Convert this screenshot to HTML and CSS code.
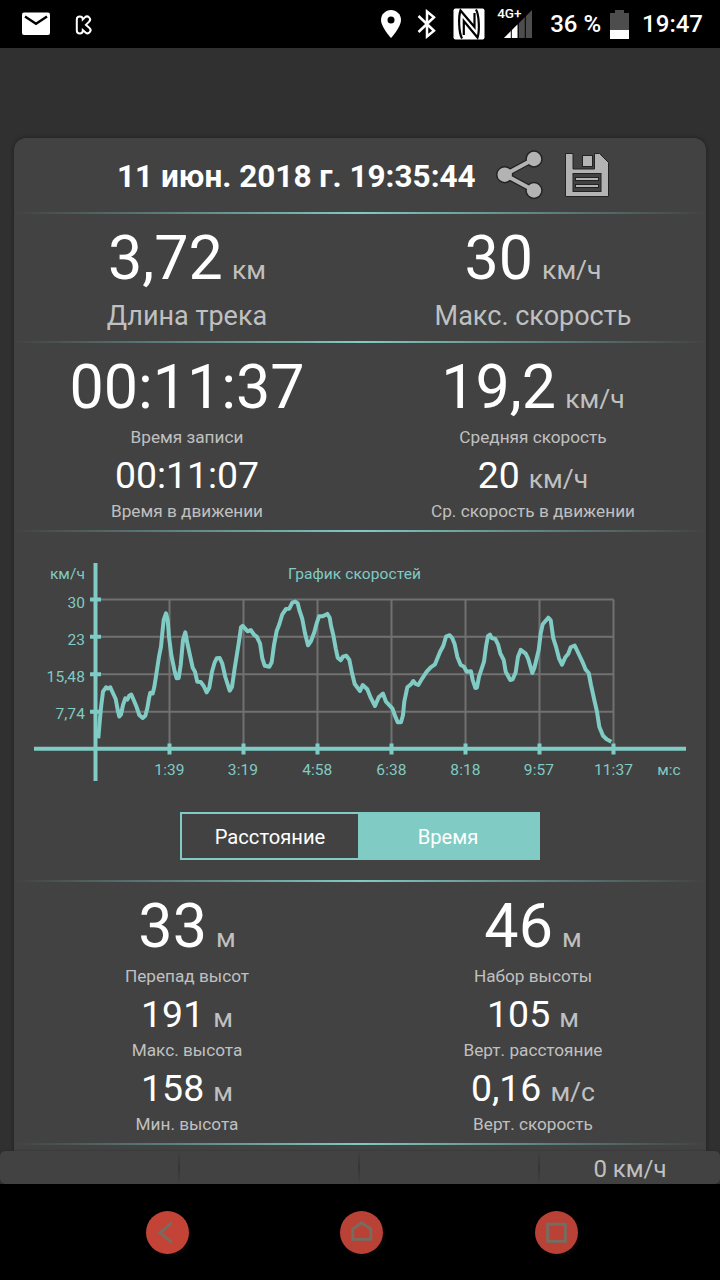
FILE: index.html
```html
<!DOCTYPE html>
<html lang="ru">
<head>
    <meta charset="UTF-8">
    <meta name="viewport" content="width=device-width, initial-scale=1.0">
    <title>Статистика трека</title>
    <link rel="stylesheet" href="styles.css">
</head>
<body>

    <div class="status-bar">
        <svg class="mail" width="28" height="24" viewBox="0 0 28 24">
            <rect x="0" y="0.5" width="28" height="22.5" rx="2" fill="#fff"/>
            <path d="M3 4.5 L14 11.8 L25 4.5" fill="none" stroke="#000" stroke-width="2.4"/>
        </svg>
        <svg class="app-icon" width="18" height="20" viewBox="0 0 18 20">
            <g fill="none" stroke-linecap="round" stroke-linejoin="round">
                <path d="M4.8 4.5 V15.5 M12 4.5 L6.5 10 L12.5 15.2" stroke="#fff" stroke-width="8"/>
                <path d="M4.8 4.5 V15.5 M12 4.5 L6.5 10 L12.5 15.2" stroke="#000" stroke-width="4"/>
            </g>
        </svg>
        <div class="status-right">
            <svg class="pin" width="20" height="28" viewBox="0 0 20 28">
                <path d="M10 0 C4.5 0 0 4.4 0 9.9 C0 17 10 28 10 28 C10 28 20 17 20 9.9 C20 4.4 15.5 0 10 0 Z" fill="#fff"/>
                <circle cx="10" cy="10" r="3.5" fill="#000"/>
            </svg>
            <svg class="bluetooth" width="20" height="30" viewBox="0 0 20 30">
                <path d="M1.5 7 L17 21.8 L10 27.5 L10 2.5 L17 8.2 L1.5 23" fill="none" stroke="#fff" stroke-width="2.5"/>
            </svg>
            <svg class="nfc" width="32" height="32" viewBox="0 0 32 32">
                <rect x="0.5" y="0.5" width="31" height="31" rx="2" fill="#fff"/>
                <path d="M9 30.5 C5.5 24 5.5 8 7.5 2.5 L21.5 19 V5 M23 1.5 C26.5 8 26.5 24 24.5 29.5 L10.8 13 V27" fill="none" stroke="#000" stroke-width="2.2"/>
            </svg>
            <div class="signal">
                <span class="network">4G+</span>
                <svg width="28" height="28" viewBox="0 0 28 28">
                    <path d="M0 28 L28 0 L28 28 Z" fill="#4d4d4d"/>
                    <path d="M0 28 L13.5 14.5 L13.5 28 Z" fill="#fff"/>
                    <path d="M7.3 12 V28 M14.3 8 V28 M21.3 2 V28" stroke="#000" stroke-width="1"/>
                </svg>
            </div>
            <span class="percent">36 %</span>
            <svg class="battery" width="19" height="29" viewBox="0 0 19 29">
                <path d="M5 0 H14 V3 H19 V29 H0 V3 H5 Z" fill="#4d4d4d"/>
                <rect x="0" y="20" width="19" height="9" fill="#fff"/>
            </svg>
            <span class="clock">19:47</span>
        </div>
    </div>

    <div class="screen">
        <div class="card">
            <div class="card-header">
                <h1>11 июн. 2018 г. 19:35:44</h1>
                <svg class="share" width="50" height="52" viewBox="0 0 50 52">
                    <g stroke="#222" fill="#222">
                        <path d="M39 10 L9.7 25.7 L39 41.5" fill="none" stroke-width="6.5"/>
                        <circle cx="39" cy="10" r="8.2"/>
                        <circle cx="9.7" cy="25.7" r="8.2"/>
                        <circle cx="39" cy="41.5" r="8.2"/>
                    </g>
                    <g fill="#b3b3b3">
                        <path d="M39 10 L9.7 25.7 L39 41.5" fill="none" stroke="#b3b3b3" stroke-width="4"/>
                        <circle cx="39" cy="10" r="7.2"/>
                        <circle cx="9.7" cy="25.7" r="7.2"/>
                        <circle cx="39" cy="41.5" r="7.2"/>
                    </g>
                </svg>
                <svg class="save" width="44" height="44" viewBox="0 0 44 44">
                    <g fill="#b3b3b3" stroke="#222" stroke-width="1">
                        <path d="M0.5 0.5 H8 V16 H29.5 V0.5 H34.5 L43.5 9.5 V43.5 H0.5 Z"/>
                        <rect x="17.5" y="2.5" width="10" height="11"/>
                        <rect x="8" y="20.5" width="28" height="18" fill="#424242"/>
                        <rect x="10.5" y="24.5" width="23" height="3"/>
                        <rect x="10.5" y="31.5" width="23" height="3"/>
                    </g>
                </svg>
            </div>

            <div class="divider"></div>

            <div class="stats summary">
                <div class="stat">
                    <div class="value big">3,72<span class="unit">км</span></div>
                    <div class="label large">Длина трека</div>
                </div>
                <div class="stat">
                    <div class="value big">30<span class="unit">км/ч</span></div>
                    <div class="label large">Макс. скорость</div>
                </div>
            </div>

            <div class="divider"></div>

            <div class="stats times">
                <div class="stat">
                    <div class="value big">00:11:37</div>
                    <div class="label">Время записи</div>
                    <div class="value">00:11:07</div>
                    <div class="label">Время в движении</div>
                </div>
                <div class="stat">
                    <div class="value big">19,2<span class="unit">км/ч</span></div>
                    <div class="label">Средняя скорость</div>
                    <div class="value">20<span class="unit">км/ч</span></div>
                    <div class="label">Ср. скорость в движении</div>
                </div>
            </div>

            <div class="divider"></div>

            <svg class="chart" width="692" height="280" viewBox="14 532 692 280">
                <path class="grid" d="M96 599.5 H613.5 M96 636.8 H613.5 M96 674.3 H613.5 M96 711.7 H613.5
                    M169.5 599.5 V748 M243.5 599.5 V748 M317.5 599.5 V748 M391.5 599.5 V748 M465.5 599.5 V748 M539.5 599.5 V748 M613.5 599.5 V748"/>
                <path class="axis" d="M95.5 563 V781 M34 748.8 H686
                    M90 599.5 H101 M90 636.8 H101 M90 674.3 H101 M90 711.7 H101
                    M169.5 743.5 V754.5 M243.5 743.5 V754.5 M317.5 743.5 V754.5 M391.5 743.5 V754.5 M465.5 743.5 V754.5 M539.5 743.5 V754.5 M613.5 743.5 V754.5"/>
                <polyline class="speed" points="98.3,738.3 100,718.3 101.3,705 103,691.7 106,687.3 108,688.5 110.3,687.3 113,693.3 115.7,699 117.7,710 119.3,716.5 121,714.5 123,705 125.3,698.3 127.3,699.7 129.3,695.7 131.3,694.5 133.7,700 136.7,707.3 139.3,715 142.7,718 145.3,715.7 147.3,708.3 149,698.3 150.3,692.7 152.7,693.5 154.3,687 156.7,671.7 159,656.7 161,646.7 162.3,633.3 163.7,620 166,613.3 167.7,620 169,636.7 171.3,655 174.7,671.7 176.7,678.3 178.7,678 180.7,665 183,640 185.3,632.3 187.7,645 192.7,667.7 195,671.7 197.3,681.7 200.7,682 203.7,686 206.7,692.3 209.3,687.7 212,671.7 214.7,662.3 216.7,658.3 219.7,658 222.3,663.7 225.3,677 229.7,690.7 232,687 234.7,668.3 238.7,643.3 241,627.3 242.7,625.9 247.7,631.3 250.7,630 254.3,635 256.7,636.7 260,643.3 262.3,658.3 264.7,665.7 269.3,666.7 271.7,662.3 274,645 276.7,631 279.3,624.3 282.3,614.3 286,609 289.3,608.7 292.3,602.7 295.3,601.5 297.7,603.3 299.3,610 302.3,619 305,633.3 308,645.3 311,641 314.3,632.3 316.7,623.3 319,616.3 322.7,616.3 327.3,613.9 329.7,617.7 331,625.7 333.3,635 335.7,648.3 337.7,657.7 340.7,660.3 343,656.7 346.3,655.7 349.3,659.7 351.7,671.7 354.7,684 360,691 362.7,685 367.3,689.3 370.7,697.7 375,706 378.7,697.3 383,693.6 386,701.7 392.3,708.3 395,715.7 397.7,722.3 401,722.3 403,715 404.3,701.7 407.3,687.3 411,684.3 413.3,681 415.7,684 418.3,685 422.3,678.3 426.7,671.7 430.7,667.3 435,664.3 440,652 443.3,645.7 446,636.7 449.7,635.2 452.3,638.3 454.7,644.3 457.3,656.7 460.7,665 464,666.7 466.7,671.7 471,671.3 472.7,680 475.3,688 477,687.5 479,676.7 484,661.7 486,646.7 488,636 490,634.5 491.7,638 495.3,639 498,644.3 500.3,653.3 503.7,660 505.7,671.7 510.3,680 512.7,679.3 515.7,672.3 518,656.7 520.7,649.9 525.7,653.7 528,658.3 532.3,673 534.3,668.3 538.7,650 540.7,633.3 542.7,624.3 548.3,617.7 550.7,620.3 553.3,638.3 556,646.7 559,658.3 562,664.7 565.3,657.3 568.3,653.7 570.7,647.3 574.7,645.5 577.3,651 582.7,662.3 585.7,669.7 588.7,673 591,685 594.3,700 597,711.7 599.3,726.7 603,735.7 606.7,739.3 611.3,741.7"/>
                <g class="y-labels">
                    <text x="85" y="579">км/ч</text>
                    <text x="85" y="608">30</text>
                    <text x="85" y="645">23</text>
                    <text x="85" y="682">15,48</text>
                    <text x="85" y="719">7,74</text>
                </g>
                <g class="x-labels">
                    <text x="354.5" y="579">График скоростей</text>
                    <text x="169.5" y="775">1:39</text>
                    <text x="243" y="775">3:19</text>
                    <text x="317.3" y="775">4:58</text>
                    <text x="391.5" y="775">6:38</text>
                    <text x="465.5" y="775">8:18</text>
                    <text x="539" y="775">9:57</text>
                    <text x="613.5" y="775">11:37</text>
                    <text x="669" y="775">м:с</text>
                </g>
            </svg>

            <div class="toggle">
                <button type="button">Расстояние</button>
                <button type="button" class="active">Время</button>
            </div>

            <div class="divider"></div>

            <div class="stats heights">
                <div class="stat">
                    <div class="value big">33<span class="unit">м</span></div>
                    <div class="label">Перепад высот</div>
                    <div class="value">191<span class="unit">м</span></div>
                    <div class="label">Макс. высота</div>
                    <div class="value">158<span class="unit">м</span></div>
                    <div class="label">Мин. высота</div>
                </div>
                <div class="stat">
                    <div class="value big">46<span class="unit">м</span></div>
                    <div class="label">Набор высоты</div>
                    <div class="value">105<span class="unit">м</span></div>
                    <div class="label">Верт. расстояние</div>
                    <div class="value">0,16<span class="unit">м/с</span></div>
                    <div class="label">Верт. скорость</div>
                </div>
            </div>

            <div class="divider"></div>
        </div>

        <div class="bottom-bar">
            <div class="cell"></div>
            <div class="cell"></div>
            <div class="cell"></div>
            <div class="cell">0 км/ч</div>
        </div>
    </div>

    <div class="nav-bar">
        <svg class="nav-btn back" viewBox="0 0 44 44">
            <path d="M26.5 12 L14.5 22 L26.5 32.5"/>
        </svg>
        <svg class="nav-btn" viewBox="0 0 44 44">
            <path d="M13 29 V18.5 L22 12 L31.5 18.5 V29 Z"/>
        </svg>
        <svg class="nav-btn" viewBox="0 0 44 44">
            <rect x="13" y="13.5" width="18" height="17.5"/>
        </svg>
    </div>

</body>
</html>
```
FILE: styles.css
```css
* {
    margin: 0;
    padding: 0;
    box-sizing: border-box;
}

body {
    width: 720px;
    height: 1280px;
    font-family: Roboto, sans-serif;
    background-color: #000;
    color: #fff;
    overflow: hidden;
    display: flex;
    flex-direction: column;
}

svg {
    display: block;
    flex-shrink: 0;
}

/* status bar */
.status-bar {
    height: 48px;
    padding: 0 17px 0 22px;
    display: flex;
    align-items: center;
    font-size: 24px;
    font-weight: 500;
}

.app-icon {
    margin: 1px 0 0 25px;
}

.status-right {
    margin-left: auto;
    display: flex;
    align-items: center;
}

.bluetooth {
    margin-left: 16px;
}

.nfc {
    margin-left: 16px;
}

.signal {
    position: relative;
    margin-left: 19px;
}

.network {
    position: absolute;
    left: -7px;
    top: -5px;
    font-size: 13.5px;
    line-height: 16px;
}

.percent {
    margin-left: 18px;
    line-height: 50px;
}

.battery {
    margin-left: 9px;
}

.clock {
    margin-left: 13px;
    line-height: 50px;
}

/* main screen */
.screen {
    height: 1136px;
    background-color: #303030;
    padding-top: 90px;
    display: flex;
    flex-direction: column;
}

.card {
    height: 1013px;
    margin: 0 14px;
    background-color: #424242;
    border-radius: 12px 12px 0 0;
    box-shadow: 0 0 4px rgba(0, 0, 0, 0.4);
}

.card-header {
    height: 74px;
    padding: 0 97px 0 103px;
    display: flex;
    align-items: center;
}

.card-header h1 {
    font-size: 31.5px;
    font-weight: 700;
    line-height: 72px;
    padding-top: 4px;
    white-space: nowrap;
}

.share {
    margin-left: auto;
}

.save {
    margin-left: 20px;
}

.divider {
    height: 2px;
    background: linear-gradient(to right, rgba(128, 203, 196, 0), #80cbc4 50%, rgba(128, 203, 196, 0));
}

.stats {
    display: flex;
    padding-top: 7px;
}

.summary {
    height: 127px;
}

.times {
    height: 187px;
}

.heights {
    height: 261px;
}

.stat {
    flex: 1;
    text-align: center;
}

.value {
    height: 49px;
    font-size: 37.4px;
    line-height: 51px;
}

.value.big {
    height: 74px;
    font-size: 61px;
    line-height: 75px;
}

.unit {
    margin-left: 9px;
    font-size: 26.6px;
    line-height: 1;
    color: #c0c0c0;
}

.label {
    height: 25px;
    font-size: 17.2px;
    line-height: 25px;
    color: #c0c0c0;
}

.big + .label {
    height: 26px;
    line-height: 26px;
}

.big + .label.large {
    height: 42px;
    font-size: 27px;
    line-height: 42px;
}

/* speed chart */
.chart text {
    font-size: 15.5px;
    letter-spacing: 0.1px;
    fill: #80cbc4;
}

.grid {
    fill: none;
    stroke: #fff;
    stroke-opacity: 0.25;
    stroke-width: 2;
}

.axis {
    fill: none;
    stroke: #80cbc4;
    stroke-width: 4;
}

.speed {
    fill: none;
    stroke: #80cbc4;
    stroke-width: 4;
    stroke-linejoin: round;
}

.y-labels {
    text-anchor: end;
}

.x-labels {
    text-anchor: middle;
}

.toggle {
    width: 360px;
    height: 48px;
    margin: 0 auto 20px;
    border: 2px solid #80cbc4;
    display: flex;
}

.toggle button {
    width: 176px;
    padding-top: 2px;
    border: none;
    background: none;
    color: #fff;
    font-family: inherit;
    font-size: 20.2px;
}

.toggle .active {
    flex: 1;
    background-color: #80cbc4;
}

/* bottom bar with current speed */
.bottom-bar {
    position: relative;
    height: 33px;
    background-color: #424242;
    border-radius: 5px;
    box-shadow: 0 0 2px rgba(0, 0, 0, 0.3);
    display: flex;
}

.cell {
    width: 180px;
    border-right: 2px solid;
    border-image: linear-gradient(rgba(0, 0, 0, 0), rgba(0, 0, 0, 0.2), rgba(0, 0, 0, 0)) 1;
    text-align: center;
    font-size: 24px;
    line-height: 37px;
    color: #c0c0c0;
}

.cell:last-child {
    border: none;
}

/* navigation buttons */
.nav-bar {
    height: 96px;
    padding-left: 3px;
    display: flex;
    justify-content: center;
    align-items: center;
    gap: 151.5px;
}

.nav-btn {
    width: 43px;
    height: 43px;
    border-radius: 50%;
    background-color: #b94136;
    box-shadow: 3px 3px 1px #060606;
    fill: none;
    stroke: #766d61;
    stroke-width: 3;
}

.nav-btn.back {
    background-color: #c34337;
}
```
